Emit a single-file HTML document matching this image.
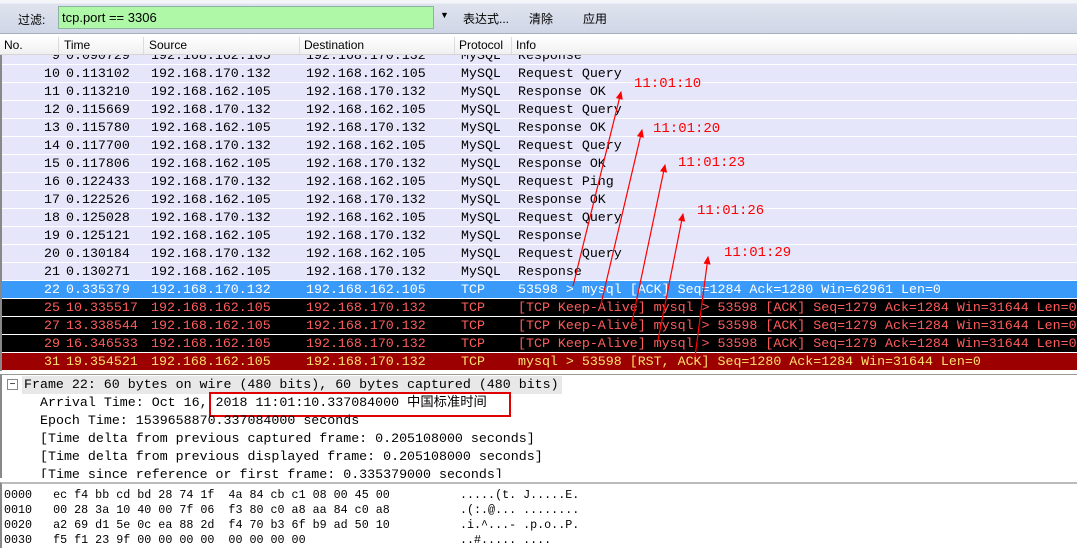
<!DOCTYPE html>
<html><head><meta charset="utf-8"><style>
*{margin:0;padding:0;box-sizing:border-box}
body{width:1077px;height:548px;overflow:hidden;background:#fff;position:relative;font-family:"Liberation Mono","Noto Sans CJK SC",monospace;}
.tb{position:absolute;left:0;top:0;width:1077px;height:34px;background:linear-gradient(#f4f5f9 0,#f4f5f9 3px,#dfe3ee 4px,#cfd6e6 33px);border-bottom:1px solid #a9afc0}
.ui{font-family:"Liberation Sans","Noto Sans CJK SC",sans-serif;font-size:12px;position:absolute;color:#000}
.filter{position:absolute;left:58px;top:6px;width:376px;height:23px;background:#aef8a7;border:1px solid #8fb3a0;font-family:"Liberation Sans",sans-serif;font-size:13px;padding:3px 0 0 3px}
.wh{position:absolute;left:0;top:34px;width:1077px;height:3px;background:#fff}
.hdr{position:absolute;left:0;top:37px;width:1077px;height:18px;background:linear-gradient(#fff,#f0f0f0);border-bottom:1px solid #d5d5d5;font-family:"Liberation Sans",sans-serif;font-size:12px}
.hdr span{position:absolute;top:1px}
.hdr i{position:absolute;top:0;width:1px;height:17px;background:#dcdcdc}
.list{position:absolute;left:0;top:55px;width:1077px;height:316px;background:#e6e6fa;overflow:hidden;border-left:2px solid #888}
.r{position:absolute;left:0;width:1077px;height:18px;border-bottom:1px solid #fff;font-size:13.3px;line-height:17px;white-space:pre}
.r span{position:absolute;top:0}
.n{right:1019px;text-align:right}
.sel{background:#3a9af9;color:#fff}
.blk{background:#000;color:#ff5c5c;border-bottom-color:#fff}
.rst{background:#9c0000;color:#ffe070}
.det{position:absolute;left:0;top:374px;width:1077px;height:104px;border-top:1px solid #999;border-left:2px solid #888;background:#fff;overflow:hidden;font-size:13.3px;line-height:18px;white-space:pre}
.det div{position:absolute;left:38px}
.hex{position:absolute;left:0;top:482px;width:1077px;height:66px;border-top:2px solid #bbb;border-left:2px solid #888;background:#fff;font-size:11.7px;line-height:15px;white-space:pre}
.hex span{position:absolute}
.lbl{position:absolute;color:#f00;font-family:"Liberation Mono",monospace;font-size:14px}
</style></head><body>
<div class="tb"></div>
<div class="ui" style="left:18px;top:11px">过滤:</div>
<div class="filter">tcp.port == 3306</div>
<div class="ui" style="left:440px;top:10px;font-size:9px">▼</div>
<div class="ui" style="left:463px;top:10px">表达式...</div>
<div class="ui" style="left:529px;top:10px">清除</div>
<div class="ui" style="left:583px;top:10px">应用</div>
<div class="wh"></div>
<div class="hdr">
<span style="left:4px">No.</span><i style="left:58px"></i>
<span style="left:64px">Time</span><i style="left:143px"></i>
<span style="left:149px">Source</span><i style="left:299px"></i>
<span style="left:304px">Destination</span><i style="left:454px"></i>
<span style="left:459px">Protocol</span><i style="left:511px"></i>
<span style="left:516px">Info</span>
</div>
<div class="list">
<div class="r" style="top:-8px"><span class="n">9</span><span style="left:64px">0.090729</span><span style="left:149px">192.168.162.105</span><span style="left:304px">192.168.170.132</span><span style="left:459px">MySQL</span><span style="left:516px">Response</span></div>
<div class="r" style="top:10px"><span class="n">10</span><span style="left:64px">0.113102</span><span style="left:149px">192.168.170.132</span><span style="left:304px">192.168.162.105</span><span style="left:459px">MySQL</span><span style="left:516px">Request Query</span></div>
<div class="r" style="top:28px"><span class="n">11</span><span style="left:64px">0.113210</span><span style="left:149px">192.168.162.105</span><span style="left:304px">192.168.170.132</span><span style="left:459px">MySQL</span><span style="left:516px">Response OK</span></div>
<div class="r" style="top:46px"><span class="n">12</span><span style="left:64px">0.115669</span><span style="left:149px">192.168.170.132</span><span style="left:304px">192.168.162.105</span><span style="left:459px">MySQL</span><span style="left:516px">Request Query</span></div>
<div class="r" style="top:64px"><span class="n">13</span><span style="left:64px">0.115780</span><span style="left:149px">192.168.162.105</span><span style="left:304px">192.168.170.132</span><span style="left:459px">MySQL</span><span style="left:516px">Response OK</span></div>
<div class="r" style="top:82px"><span class="n">14</span><span style="left:64px">0.117700</span><span style="left:149px">192.168.170.132</span><span style="left:304px">192.168.162.105</span><span style="left:459px">MySQL</span><span style="left:516px">Request Query</span></div>
<div class="r" style="top:100px"><span class="n">15</span><span style="left:64px">0.117806</span><span style="left:149px">192.168.162.105</span><span style="left:304px">192.168.170.132</span><span style="left:459px">MySQL</span><span style="left:516px">Response OK</span></div>
<div class="r" style="top:118px"><span class="n">16</span><span style="left:64px">0.122433</span><span style="left:149px">192.168.170.132</span><span style="left:304px">192.168.162.105</span><span style="left:459px">MySQL</span><span style="left:516px">Request Ping</span></div>
<div class="r" style="top:136px"><span class="n">17</span><span style="left:64px">0.122526</span><span style="left:149px">192.168.162.105</span><span style="left:304px">192.168.170.132</span><span style="left:459px">MySQL</span><span style="left:516px">Response OK</span></div>
<div class="r" style="top:154px"><span class="n">18</span><span style="left:64px">0.125028</span><span style="left:149px">192.168.170.132</span><span style="left:304px">192.168.162.105</span><span style="left:459px">MySQL</span><span style="left:516px">Request Query</span></div>
<div class="r" style="top:172px"><span class="n">19</span><span style="left:64px">0.125121</span><span style="left:149px">192.168.162.105</span><span style="left:304px">192.168.170.132</span><span style="left:459px">MySQL</span><span style="left:516px">Response</span></div>
<div class="r" style="top:190px"><span class="n">20</span><span style="left:64px">0.130184</span><span style="left:149px">192.168.170.132</span><span style="left:304px">192.168.162.105</span><span style="left:459px">MySQL</span><span style="left:516px">Request Query</span></div>
<div class="r" style="top:208px"><span class="n">21</span><span style="left:64px">0.130271</span><span style="left:149px">192.168.162.105</span><span style="left:304px">192.168.170.132</span><span style="left:459px">MySQL</span><span style="left:516px">Response</span></div>
<div class="r sel" style="top:226px"><span class="n">22</span><span style="left:64px">0.335379</span><span style="left:149px">192.168.170.132</span><span style="left:304px">192.168.162.105</span><span style="left:459px">TCP</span><span style="left:516px">53598 &gt; mysql [ACK] Seq=1284 Ack=1280 Win=62961 Len=0</span></div>
<div class="r blk" style="top:244px"><span class="n">25</span><span style="left:64px">10.335517</span><span style="left:149px">192.168.162.105</span><span style="left:304px">192.168.170.132</span><span style="left:459px">TCP</span><span style="left:516px">[TCP Keep-Alive] mysql &gt; 53598 [ACK] Seq=1279 Ack=1284 Win=31644 Len=0</span></div>
<div class="r blk" style="top:262px"><span class="n">27</span><span style="left:64px">13.338544</span><span style="left:149px">192.168.162.105</span><span style="left:304px">192.168.170.132</span><span style="left:459px">TCP</span><span style="left:516px">[TCP Keep-Alive] mysql &gt; 53598 [ACK] Seq=1279 Ack=1284 Win=31644 Len=0</span></div>
<div class="r blk" style="top:280px"><span class="n">29</span><span style="left:64px">16.346533</span><span style="left:149px">192.168.162.105</span><span style="left:304px">192.168.170.132</span><span style="left:459px">TCP</span><span style="left:516px">[TCP Keep-Alive] mysql &gt; 53598 [ACK] Seq=1279 Ack=1284 Win=31644 Len=0</span></div>
<div class="r rst" style="top:298px"><span class="n">31</span><span style="left:64px">19.354521</span><span style="left:149px">192.168.162.105</span><span style="left:304px">192.168.170.132</span><span style="left:459px">TCP</span><span style="left:516px">mysql &gt; 53598 [RST, ACK] Seq=1280 Ack=1284 Win=31644 Len=0</span></div>
</div>
<div class="det">
<div style="left:5px;top:4px;width:11px;height:11px;border:1px solid #888;font-size:10px;line-height:9px;text-align:center;font-family:'Liberation Sans'">−</div>
<div style="left:20px;top:1px;width:540px;height:18px;background:#e8e8e8"></div>
<div style="left:22px;top:1px">Frame 22: 60 bytes on wire (480 bits), 60 bytes captured (480 bits)</div>
<div style="top:19px">Arrival Time: Oct 16, 2018 11:01:10.337084000 中国标准时间</div>
<div style="left:207px;top:17px;width:302px;height:25px;border:2px solid #e00000"></div>
<div style="top:37px">Epoch Time: 1539658870.337084000 seconds</div>
<div style="top:55px">[Time delta from previous captured frame: 0.205108000 seconds]</div>
<div style="top:73px">[Time delta from previous displayed frame: 0.205108000 seconds]</div>
<div style="top:91px">[Time since reference or first frame: 0.335379000 seconds]</div>
</div>
<div class="hex">
<span style="left:2px;top:4px">0000   ec f4 bb cd bd 28 74 1f  4a 84 cb c1 08 00 45 00</span><span style="left:458px;top:4px">.....(t. J.....E.</span>
<span style="left:2px;top:19px">0010   00 28 3a 10 40 00 7f 06  f3 80 c0 a8 aa 84 c0 a8</span><span style="left:458px;top:19px">.(:.@... ........</span>
<span style="left:2px;top:34px">0020   a2 69 d1 5e 0c ea 88 2d  f4 70 b3 6f b9 ad 50 10</span><span style="left:458px;top:34px">.i.^...- .p.o..P.</span>
<span style="left:2px;top:49px">0030   f5 f1 23 9f 00 00 00 00  00 00 00 00</span><span style="left:458px;top:49px">..#..... ....</span>
</div>
<svg style="position:absolute;left:0;top:0" width="1077" height="548">
<defs><marker id="a" markerWidth="8" markerHeight="8" refX="6" refY="3" orient="auto"><path d="M0,0 L7,3 L0,6 Z" fill="#f00"/></marker></defs>
<g stroke="#f00" stroke-width="1.2" fill="none" marker-end="url(#a)">
<line x1="573" y1="286" x2="621" y2="92"/>
<line x1="601" y1="304" x2="642" y2="130"/>
<line x1="632" y1="322" x2="665" y2="165"/>
<line x1="658" y1="340" x2="683" y2="214"/>
<line x1="695" y1="357" x2="708" y2="257"/>
</g></svg>
<div class="lbl" style="left:634px;top:76px">11:01:10</div>
<div class="lbl" style="left:653px;top:121px">11:01:20</div>
<div class="lbl" style="left:678px;top:155px">11:01:23</div>
<div class="lbl" style="left:697px;top:203px">11:01:26</div>
<div class="lbl" style="left:724px;top:245px">11:01:29</div>
</body></html>
